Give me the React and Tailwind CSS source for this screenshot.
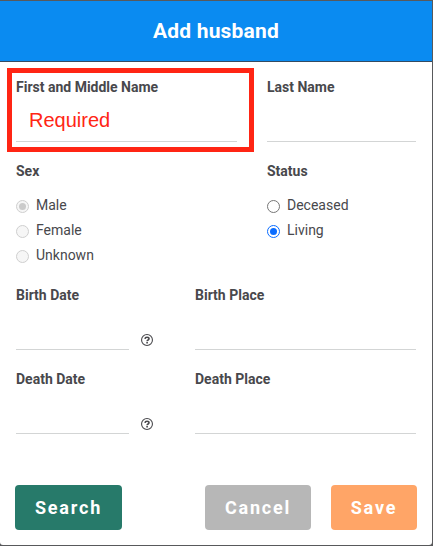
import React from "react";

function Field({ label, className }) {
  return (
    <label className={`block ${className}`}>
      <span className="block h-4 text-[14px] leading-4 font-bold whitespace-nowrap">{label}</span>
      <input type="text" className="block h-[47px] w-full border-b border-[#d3d5d5] bg-transparent outline-none" />
    </label>
  );
}

function Choice({ label, checked, disabled }) {
  const ring = disabled ? "border-[#cfcfcf] bg-[#f6f6f6]" : checked ? "border-[#0a6cff] bg-white" : "border-[#767676] bg-white";
  const dot = disabled ? "bg-[#cbcbcb]" : "bg-[#0a6cff]";
  return (
    <div role="radio" aria-checked={!!checked} className="flex h-[25px] items-start gap-[7px]">
      <span className={`mt-[7px] flex size-[13px] shrink-0 items-center justify-center rounded-full border ${ring}`}>
        {checked && <span className={`size-[7px] rounded-full ${dot}`} />}
      </span>
      <span className="text-[14px] leading-[25px]">{label}</span>
    </div>
  );
}

function Help() {
  return (
    <svg className="mt-[38px] ml-3 size-[12px] shrink-0" viewBox="0 0 12 12" fill="none" stroke="#48484c">
      <circle cx="6" cy="6" r="5.45" strokeWidth="1.1" />
      <path d="M4 4.9C4.1 3.7 5 3.2 6 3.2c1.1 0 2 .6 2 1.6C8 6 6.1 5.9 6.1 7.2" strokeWidth="1.6" />
      <path d="M6.1 7.9v1.5" strokeWidth="1.6" />
    </svg>
  );
}

function Action({ children, className }) {
  return (
    <button className={`h-[45px] rounded-[4px] text-[18px] font-bold tracking-[1.8px] text-white ${className}`}>{children}</button>
  );
}

export default function App() {
  return (
    <div className="h-[546px] w-[433px] overflow-hidden border-t border-r border-b border-[#58595b] bg-[#58595b] font-['Roboto',sans-serif] text-[#48484c]">
      <div className="flex h-full flex-col overflow-hidden rounded-b-[3px] bg-white">
        <header className="flex h-[61px] shrink-0 items-center justify-center border-b border-[#344b62] bg-[#0a8bf1] text-white">
          <h1 className="text-[21px] leading-6 font-bold tracking-[0.2px]">Add husband</h1>
        </header>
        <main className="flex grow flex-col pr-4 pl-4">
          <div className="relative flex pt-[17px]">
            <Field label="First and Middle Name" className="mr-[30px] w-[221px]" />
            <Field label="Last Name" className="w-[149px]" />
            <div className="absolute top-[6px] -left-[9px] h-[84px] w-[247px] border-[5px] border-[#ff2514]">
              <span className="absolute top-[35px] left-[17px] font-['Liberation_Sans',sans-serif] text-[20px] leading-6 text-[#ff2514]">Required</span>
            </div>
          </div>
          <div className="flex pt-[21px]">
            <div className="w-[251px]">
              <h2 className="mb-[14px] text-[14px] leading-4 font-bold">Sex</h2>
              <Choice label="Male" checked disabled />
              <Choice label="Female" disabled />
              <Choice label="Unknown" disabled />
            </div>
            <div>
              <h2 className="mb-[14px] text-[14px] leading-4 font-bold">Status</h2>
              <Choice label="Deceased" />
              <Choice label="Living" checked />
            </div>
          </div>
          <div className="flex pt-[19px]">
            <div className="flex w-[179px]">
              <Field label="Birth Date" className="w-[113px]" />
              <div className="pt-[9px]"><Help /></div>
            </div>
            <Field label="Birth Place" className="w-[221px]" />
          </div>
          <div className="flex pt-[21px]">
            <div className="flex w-[179px]">
              <Field label="Death Date" className="w-[113px]" />
              <div className="pt-[9px]"><Help /></div>
            </div>
            <Field label="Death Place" className="w-[221px]" />
          </div>
          <div className="-mx-px mt-[51px] flex">
            <Action className="w-[107px] bg-[#277a6a]">Search</Action>
            <Action className="ml-auto w-[106px] bg-[#b7b7b7]">Cancel</Action>
            <Action className="ml-5 w-[86px] bg-[#ffa567]">Save</Action>
          </div>
        </main>
      </div>
    </div>
  );
}
